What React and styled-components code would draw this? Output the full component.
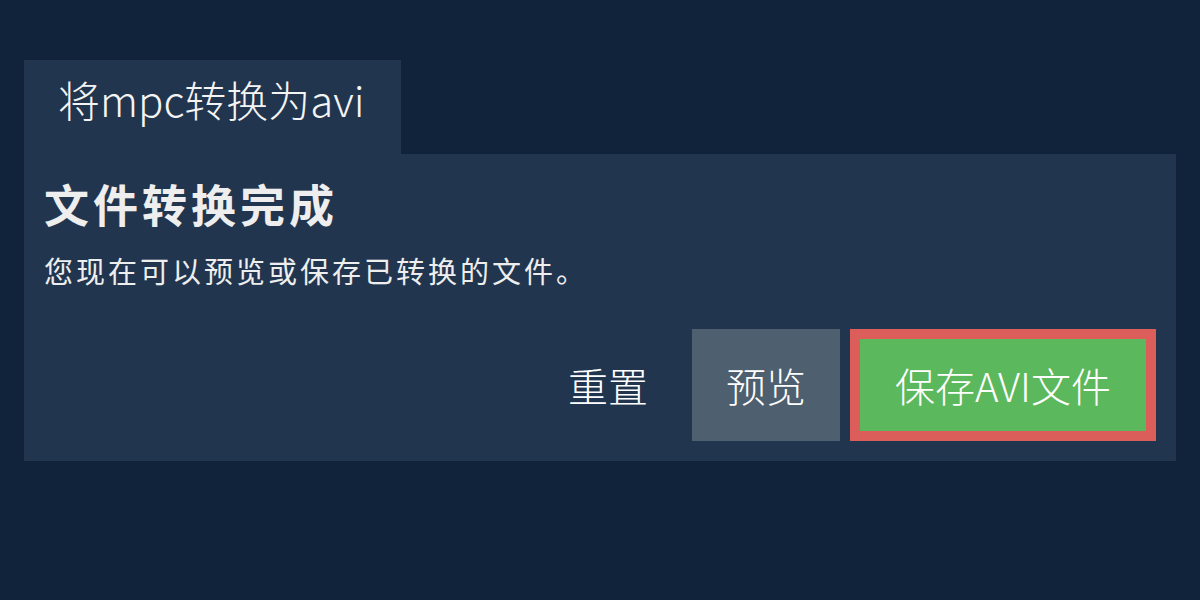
import React from "react";
import styled, { createGlobalStyle } from "styled-components";

const Global = createGlobalStyle`
  html, body { margin: 0; padding: 0; background: #11233a; }
  body { font-family: "Noto Sans", "Noto Sans CJK SC", sans-serif; color: #f2f2f2; }
  * { box-sizing: border-box; }
`;

const Page = styled.div`
  width: 1200px;
  height: 600px;
  padding: 60px 24px 0;
  background: #11233a;
`;

const Tab = styled.div`
  display: inline-block;
  height: 94px;
  padding: 18px 36px 0 34px;
  background: #21354e;
  font-family: "Noto Sans CJK SC", sans-serif;
  font-weight: 300;
  font-size: 42px;
  line-height: 42px;
  color: #f4f4f4;
`;

const Panel = styled.div`
  background: #21354e;
  padding: 22px 20px 20px;
`;

const Heading = styled.h1`
  margin: 0;
  font-family: "Noto Sans CJK SC", sans-serif;
  font-weight: 700;
  font-size: 45px;
  letter-spacing: 4px;
  line-height: 56px;
  color: #eeeeee;
`;

const Sub = styled.p`
  margin: 18px 0 0;
  font-family: "Noto Sans CJK SC", sans-serif;
  font-size: 29px;
  letter-spacing: 3px;
  line-height: 40px;
  color: #eeeeee;
`;

const Actions = styled.div`
  display: flex;
  justify-content: flex-end;
  align-items: center;
  gap: 10px;
  margin-top: 39px;
`;

const Button = styled.button`
  height: 112px;
  padding: 0 ${(p) => p.$px}px;
  border: ${(p) => (p.$outline ? "10px solid #dc5e5b" : "none")};
  background: ${(p) => p.$bg};
  color: #ffffff;
  font-family: "Noto Sans CJK SC", sans-serif;
  font-weight: 300;
  font-size: 40px;
  cursor: pointer;
`;

export default function App() {
  return (
    <>
      <Global />
      <Page>
        <Tab>将mpc转换为avi</Tab>
        <Panel>
          <Heading>文件转换完成</Heading>
          <Sub>您现在可以预览或保存已转换的文件。</Sub>
          <Actions>
            <Button $bg="transparent" $px={34}>重置</Button>
            <Button $bg="#4e5f6f" $px={34}>预览</Button>
            <Button $bg="#5cb85c" $px={35} $outline>保存AVI文件</Button>
          </Actions>
        </Panel>
      </Page>
    </>
  );
}
